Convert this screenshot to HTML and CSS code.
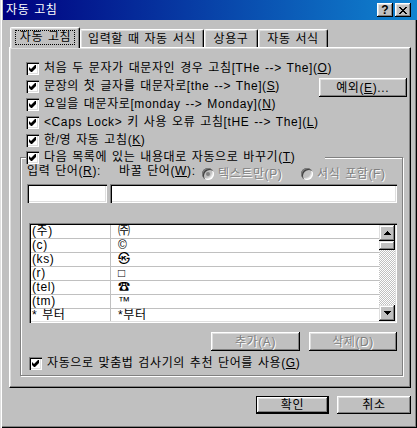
FILE: index.html
```html
<!DOCTYPE html>
<html lang="ko">
<head>
    <meta charset="UTF-8">
    <meta name="viewport" content="width=device-width, initial-scale=1.0">
    <title>자동 고침</title>
    <link rel="stylesheet" href="styles.css">
</head>
<body>
    <div class="window">
        <div class="title-bar">
            <span class="title">자동 고침</span>
            <div class="caption-buttons">
                <span class="caption-btn help">?</span>
                <span class="caption-btn">
                    <svg width="8" height="7" viewBox="0 0 8 7"><path d="M0 0h2v1H0zM6 0h2v1H6zM1 1h2v1H1zM5 1h2v1H5zM2 2h4v1H2zM3 3h2v1H3zM2 4h4v1H2zM1 5h2v1H1zM5 5h2v1H5zM0 6h2v1H0zM6 6h2v1H6z"/></svg>
                </span>
            </div>
        </div>

        <div class="tabs">
            <div class="tab tab-autocorrect active"><span class="focus">자동 고침</span></div>
            <div class="tab tab-asyoutype">입력할 때 자동 서식</div>
            <div class="tab tab-autotext">상용구</div>
            <div class="tab tab-autoformat">자동 서식</div>
        </div>

        <div class="panel">
            <div class="options">
                <label class="check">
                    <span class="checkbox"><svg width="7" height="7" viewBox="0 0 7 7"><polygon points="0,2 2,4 6,0 7,0 7,3 3,7 2,7 0,5"/></svg></span>
                    <span>처음 두 문자가 대문자인 경우 고침[THe --&gt; The](<u>O</u>)</span>
                </label>
                <label class="check">
                    <span class="checkbox"><svg width="7" height="7" viewBox="0 0 7 7"><polygon points="0,2 2,4 6,0 7,0 7,3 3,7 2,7 0,5"/></svg></span>
                    <span>문장의 첫 글자를 대문자로[the --&gt; The](<u>S</u>)</span>
                </label>
                <label class="check">
                    <span class="checkbox"><svg width="7" height="7" viewBox="0 0 7 7"><polygon points="0,2 2,4 6,0 7,0 7,3 3,7 2,7 0,5"/></svg></span>
                    <span>요일을 대문자로[monday --&gt; Monday](<u>N</u>)</span>
                </label>
                <label class="check">
                    <span class="checkbox"><svg width="7" height="7" viewBox="0 0 7 7"><polygon points="0,2 2,4 6,0 7,0 7,3 3,7 2,7 0,5"/></svg></span>
                    <span>&lt;Caps Lock&gt; 키 사용 오류 고침[tHE --&gt; The](<u>L</u>)</span>
                </label>
                <label class="check">
                    <span class="checkbox"><svg width="7" height="7" viewBox="0 0 7 7"><polygon points="0,2 2,4 6,0 7,0 7,3 3,7 2,7 0,5"/></svg></span>
                    <span>한/영 자동 고침(<u>K</u>)</span>
                </label>
                <button class="button btn-exceptions">예외(<u>E</u>)...</button>
            </div>

            <fieldset class="group">
                <legend>
                    <label class="check">
                        <span class="checkbox"><svg width="7" height="7" viewBox="0 0 7 7"><polygon points="0,2 2,4 6,0 7,0 7,3 3,7 2,7 0,5"/></svg></span>
                        <span>다음 목록에 있는 내용대로 자동으로 바꾸기(<u>T</u>)</span>
                    </label>
                </legend>

                <div class="field-labels">
                    <span class="label-from">입력 단어(<u>R</u>):</span>
                    <span class="label-to">바꿀 단어(<u>W</u>):</span>
                    <span class="option option-plain"><span class="radio selected"></span><span class="disabled">텍스트만(P)</span></span>
                    <span class="option"><span class="radio"></span><span class="disabled">서식 포함(F)</span></span>
                </div>

                <div class="inputs">
                    <div class="text-input short"></div>
                    <div class="text-input long"></div>
                </div>

                <div class="list">
                    <div class="list-rows">
                        <div class="list-row"><span class="cell-from">(주)</span><span class="cell-to">㈜</span></div>
                        <div class="list-row"><span class="cell-from">(c)</span><span class="cell-to">©</span></div>
                        <div class="list-row"><span class="cell-from">(ks)</span><span class="cell-to">㉿</span></div>
                        <div class="list-row"><span class="cell-from">(r)</span><span class="cell-to">□</span></div>
                        <div class="list-row"><span class="cell-from">(tel)</span><span class="cell-to">☎</span></div>
                        <div class="list-row"><span class="cell-from">(tm)</span><span class="cell-to">™</span></div>
                        <div class="list-row"><span class="cell-from">* 부터</span><span class="cell-to">*부터</span></div>
                    </div>
                    <div class="scrollbar">
                        <span class="scroll-btn"><svg width="7" height="4" viewBox="0 0 7 4"><path d="M3 0h1v1h1v1h1v1h1v1H0V3h1V2h1V1h1z"/></svg></span>
                        <span class="scroll-thumb"></span>
                        <span class="scroll-track"></span>
                        <span class="scroll-btn"><svg width="7" height="4" viewBox="0 0 7 4"><path d="M0 0h7v1H6v1H5v1H4v1H3V3H2V2H1V1H0z"/></svg></span>
                    </div>
                </div>

                <div class="list-buttons">
                    <button class="button btn-add disabled">추가(A)</button>
                    <button class="button btn-delete disabled">삭제(D)</button>
                </div>

                <label class="check spell-check">
                    <span class="checkbox"><svg width="7" height="7" viewBox="0 0 7 7"><polygon points="0,2 2,4 6,0 7,0 7,3 3,7 2,7 0,5"/></svg></span>
                    <span>자동으로 맞춤법 검사기의 추천 단어를 사용(<u>G</u>)</span>
                </label>
            </fieldset>
        </div>

        <div class="dialog-buttons">
            <button class="button default btn-ok">확인</button>
            <button class="button btn-cancel">취소</button>
        </div>
    </div>
</body>
</html>
```

FILE: styles.css
```css
* {
    box-sizing: border-box;
}

body {
    margin: 0;
    background: #c0c0c0;
    font-family: "Liberation Sans", "Noto Sans CJK KR", sans-serif;
    font-size: 12px;
    line-height: 14px;
    letter-spacing: 0.6px;
    word-spacing: 1px;
    color: #000;
}

u {
    text-underline-offset: 1px;
}

.window {
    width: 417px;
    height: 428px;
    padding: 0 3px 3px 3px;
    display: flex;
    flex-direction: column;
    box-shadow: inset 1px 0 #dfdfdf, inset 2px 0 #fff, inset -1px -1px #000, inset -2px -2px #808080;
}

/* title bar */
.title-bar {
    height: 20px;
    margin-right: -3px;
    padding: 0 6px 0 3px;
    display: flex;
    align-items: center;
    background: linear-gradient(to right, #000080, #1084d0);
    color: #fff;
}

.caption-buttons {
    margin-left: auto;
    display: flex;
    gap: 2px;
}

.caption-btn {
    width: 16px;
    height: 14px;
    display: flex;
    align-items: center;
    justify-content: center;
    background: #c0c0c0;
    color: #000;
    letter-spacing: 0;
    box-shadow: inset -1px -1px #000, inset 1px 1px #fff, inset -2px -2px #808080, inset 2px 2px #dfdfdf;
}

.caption-btn.help {
    font-weight: bold;
    font-size: 12px;
    line-height: 12px;
}

/* tabs */
.tabs {
    position: relative;
    z-index: 1;
    height: 20px;
    margin-top: 7px;
    padding-left: 7px;
    display: flex;
    align-items: flex-end;
}

.tab {
    height: 18px;
    padding-top: 2px;
    text-align: center;
    white-space: nowrap;
    border-top: 1px solid #fff;
    border-left: 1px solid #fff;
    border-right: 1px solid #000;
    border-radius: 2px 2px 0 0;
    box-shadow: inset -1px 0 #808080, inset 1px 1px #dfdfdf;
}

.tab.active {
    height: 21px;
    margin-bottom: -1px;
    padding-top: 2px;
    background: #c0c0c0;
}

.tab-autocorrect { width: 70px; }
.tab-asyoutype { width: 124px; }
.tab-autotext { width: 54px; }
.tab-autoformat { width: 70px; }

.focus {
    display: inline-block;
    padding: 0 3px 0 4px;
    line-height: 13px;
    border: 1px dotted #000;
}

/* tab page */
.panel {
    width: 402px;
    height: 341px;
    margin-left: 6px;
    padding: 11px 7px 0 10px;
    border: 1px solid;
    border-color: #fff #000 #000 #fff;
    box-shadow: inset -1px -1px #808080, inset 1px 1px #dfdfdf;
}

.options {
    margin-left: 6px;
    display: grid;
    grid-template-columns: 1fr 88px;
    grid-auto-rows: 18px;
}

.options .check {
    grid-column: 1;
}

.options .check:first-child {
    grid-column: 1 / -1;
}

.btn-exceptions {
    grid-column: 2;
    grid-row: 2 / span 2;
    height: 19px;
    margin-top: 1px;
}

.check {
    display: flex;
    align-items: center;
    gap: 5px;
    white-space: nowrap;
}

.checkbox {
    width: 13px;
    height: 13px;
    flex: none;
    display: flex;
    align-items: center;
    justify-content: center;
    background: #fff;
    box-shadow: inset 1px 1px #808080, inset 2px 2px #000, inset -1px -1px #fff, inset -2px -2px #dfdfdf;
}

/* group box */
.group {
    min-width: 0;
    margin: 1px 0 0 0;
    padding: 0 5px 3px 6px;
    border: 1px solid #808080;
    box-shadow: inset 1px 1px #fff, 1px 1px #fff;
}

.group legend {
    margin-left: -1px;
    padding: 0 30px 0 0;
    background: #c0c0c0;
}

.field-labels {
    height: 17px;
    display: flex;
    white-space: nowrap;
}

.label-from { width: 92px; }
.label-to { width: 83px; }

.option {
    display: flex;
    align-items: center;
    gap: 4px;
    margin-top: 2px;
}

.option-plain { width: 99px; }

.radio {
    position: relative;
    width: 12px;
    height: 12px;
    flex: none;
    border-radius: 50%;
    background: #c0c0c0;
    box-shadow: inset 1px 1px #808080, inset 2px 2px #404040, inset -1px -1px #fff, inset -2px -2px #dfdfdf;
}

.radio.selected::after {
    content: "";
    position: absolute;
    left: 4px;
    top: 4px;
    width: 4px;
    height: 4px;
    border-radius: 50%;
    background: #808080;
}

.disabled {
    color: #808080;
    text-shadow: 1px 1px 0 #fff;
}

.inputs {
    margin-top: 3px;
    display: flex;
    gap: 3px;
}

.text-input {
    height: 19px;
    background: #fff;
    box-shadow: inset 1px 1px #808080, inset 2px 2px #000, inset -1px -1px #fff, inset -2px -2px #dfdfdf;
}

.text-input.short { width: 80px; }
.text-input.long { flex: 1; }

/* replacement list */
.list {
    height: 100px;
    margin: 20px 0 0 2px;
    padding: 2px;
    display: flex;
    background: #fff;
    box-shadow: inset 1px 1px #808080, inset 2px 2px #000, inset -1px -1px #fff, inset -2px -2px #dfdfdf;
}

.list-rows {
    flex: 1;
    overflow: hidden;
}

.list-row {
    height: 14px;
    display: grid;
    grid-template-columns: 80px 1fr;
    line-height: 13px;
    border-bottom: 1px solid #c0c0c0;
    white-space: nowrap;
}

.cell-from {
    padding-left: 1px;
    border-right: 1px solid #c0c0c0;
}

.cell-to {
    padding-left: 7px;
}

.scrollbar {
    width: 16px;
    display: flex;
    flex-direction: column;
}

.scroll-btn,
.scroll-thumb {
    flex: none;
    background: #c0c0c0;
    box-shadow: inset -1px -1px #000, inset 1px 1px #dfdfdf, inset -2px -2px #808080, inset 2px 2px #fff;
}

.scroll-btn {
    height: 16px;
    display: flex;
    align-items: center;
    justify-content: center;
}

.scroll-thumb {
    height: 9px;
}

.scroll-track {
    flex: 1;
    background-image: conic-gradient(#fff 25%, #c0c0c0 0 50%, #fff 0 75%, #c0c0c0 0);
    background-size: 2px 2px;
}

.list-buttons {
    margin-top: 9px;
    display: flex;
    justify-content: flex-end;
    gap: 9px;
}

.btn-add { width: 89px; height: 19px; }
.btn-delete { width: 88px; height: 19px; }

.spell-check {
    height: 18px;
    margin: 3px 0 0 2px;
}

/* buttons */
.button {
    padding: 0;
    display: flex;
    align-items: center;
    justify-content: center;
    border: none;
    background: #c0c0c0;
    font: inherit;
    letter-spacing: inherit;
    word-spacing: inherit;
    color: #000;
    box-shadow: inset -1px -1px #000, inset 1px 1px #fff, inset -2px -2px #808080, inset 2px 2px #dfdfdf;
}

.button.disabled {
    color: #808080;
    text-shadow: 1px 1px 0 #fff;
}

.button.default {
    border: 1px solid #000;
}

.dialog-buttons {
    margin-top: 8px;
    padding-right: 3px;
    display: flex;
    justify-content: flex-end;
    gap: 8px;
}

.btn-ok { width: 73px; height: 18px; }
.btn-cancel { width: 74px; height: 18px; }
```
